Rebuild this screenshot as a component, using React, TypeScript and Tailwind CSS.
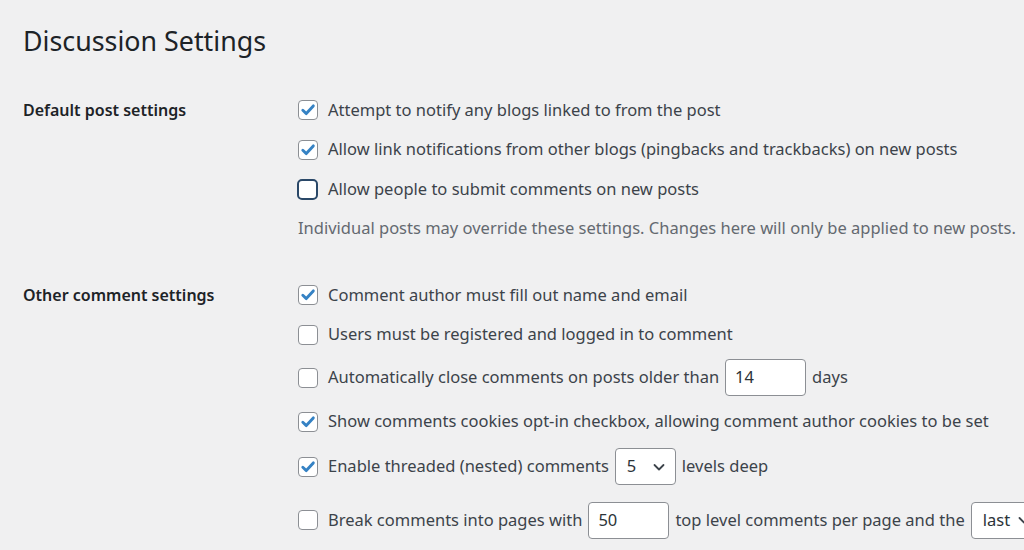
import React from "react";

type Props = { checked?: boolean; focused?: boolean };

const Checkbox: React.FC<Props> = ({ checked, focused }) => {
  if (focused) {
    return (
      <span className="w-[21px] h-[21px] -ml-[1px] shrink-0 rounded-[5px] border-2 border-[#2a4868] bg-white" />
    );
  }
  return (
    <span className="w-[20px] h-[20px] shrink-0 rounded-[4px] border border-[#8c8f94] bg-white flex items-center justify-center">
      {checked && (
        <svg width="16" height="16" viewBox="0 0 16 16">
          <path
            d="M2.8 8.3 L6.3 11.6 L13.3 3.9"
            fill="none"
            stroke="#3582c4"
            strokeWidth="2.9"
            strokeLinecap="round"
            strokeLinejoin="round"
          />
        </svg>
      )}
    </span>
  );
};

const Chevron = () => (
  <svg width="14" height="14" viewBox="0 0 14 14">
    <path
      d="M2.5 5 L7 9.5 L11.5 5"
      fill="none"
      stroke="#3c434a"
      strokeWidth="1.8"
      strokeLinecap="round"
      strokeLinejoin="round"
    />
  </svg>
);

const TextBox: React.FC<{ value: string }> = ({ value }) => (
  <span className="w-[81px] h-[37px] mx-[6px] rounded-[4px] border border-[#8c8f94] bg-white flex items-center px-[9px] text-[#2c3338]">
    {value}
  </span>
);

const Row: React.FC<{ h: string; children: React.ReactNode }> = ({ h, children }) => (
  <div className={`flex items-center gap-[10px] ${h}`}>{children}</div>
);

export default function App() {
  return (
    <div
      className="w-[1024px] h-[550px] overflow-hidden bg-[#f0f0f1] text-[#3c434a] text-[16.5px]"
      style={{ fontFamily: '"Noto Sans", sans-serif' }}
    >
      <h1 className="pl-[23px] pt-[21px] h-[90px] text-[26.8px] font-normal text-[#1d2327] leading-[40px]">
        Discussion Settings
      </h1>

      <div className="flex">
        <div className="w-[298px] pl-[23px] shrink-0 h-[40px] flex items-center font-semibold text-[16px] text-[#1d2327]">
          Default post settings
        </div>
        <div className="flex flex-col whitespace-nowrap">
          <Row h="h-[40px]">
            <Checkbox checked />
            <span>Attempt to notify any blogs linked to from the post</span>
          </Row>
          <Row h="h-[39px]">
            <Checkbox checked />
            <span>Allow link notifications from other blogs (pingbacks and trackbacks) on new posts</span>
          </Row>
          <Row h="h-[40px]">
            <Checkbox focused />
            <span>Allow people to submit comments on new posts</span>
          </Row>
          <div className="h-[39px] flex items-center text-[#646970]">
            Individual posts may override these settings. Changes here will only be applied to new posts.
          </div>
        </div>
      </div>

      <div className="flex mt-[27px]">
        <div className="w-[298px] pl-[23px] shrink-0 h-[40px] flex items-center font-semibold text-[16px] text-[#1d2327]">
          Other comment settings
        </div>
        <div className="flex flex-col whitespace-nowrap">
          <Row h="h-[40px]">
            <Checkbox checked />
            <span>Comment author must fill out name and email</span>
          </Row>
          <Row h="h-[39px]">
            <Checkbox />
            <span>Users must be registered and logged in to comment</span>
          </Row>
          <Row h="h-[47px]">
            <Checkbox />
            <span className="flex items-center">
              Automatically close comments on posts older than
              <TextBox value="14" />
              days
            </span>
          </Row>
          <Row h="h-[41px]">
            <Checkbox checked />
            <span>Show comments cookies opt-in checkbox, allowing comment author cookies to be set</span>
          </Row>
          <Row h="h-[49px]">
            <Checkbox checked />
            <span className="flex items-center">
              Enable threaded (nested) comments
              <span className="w-[61px] h-[37px] mx-[6px] rounded-[4px] border border-[#8c8f94] bg-white flex items-center justify-between pl-[11px] pr-[9px] text-[#2c3338]">
                5
                <Chevron />
              </span>
              levels deep
            </span>
          </Row>
          <Row h="h-[58px]">
            <Checkbox />
            <span className="flex items-center">
              Break comments into pages with
              <TextBox value="50" />
              top level comments per page and the
              <span className="w-[70px] h-[37px] mx-[6px] rounded-[4px] border border-[#8c8f94] bg-white flex items-center justify-between pl-[11px] pr-[9px] text-[#2c3338] shrink-0">
                last
                <Chevron />
              </span>
            </span>
          </Row>
        </div>
      </div>
    </div>
  );
}
